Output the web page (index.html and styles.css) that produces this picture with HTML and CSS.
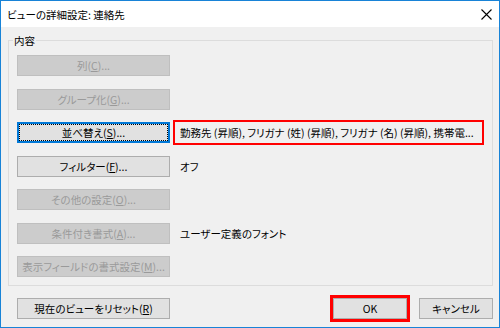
FILE: index.html
```html
<!DOCTYPE html>
<html lang="ja">
<head>
<meta charset="utf-8">
<link rel="stylesheet" href="styles.css">
</head>
<body>
<div class="window">
  <div class="titlebar">
    <span class="title">ビューの詳細設定: 連絡先</span>
    <svg class="close" width="11" height="11" viewBox="0 0 11 11"><path d="M0.5 0.5L10.5 10.5M10.5 0.5L0.5 10.5" stroke="#000" stroke-width="1.1" fill="none"/></svg>
  </div>
  <div class="content">
    <fieldset class="group">
      <legend class="legend">内容</legend>
      <div class="rows">
        <div class="row"><button class="btn wide" disabled>列(<u>C</u>)...</button></div>
        <div class="row"><button class="btn wide" disabled>グループ化(<u>G</u>)...</button></div>
        <div class="row"><button class="btn wide focus">並べ替え(<u>S</u>)...</button><div class="value highlight">勤務先 (昇順), フリガナ (姓) (昇順), フリガナ (名) (昇順), 携帯電...</div></div>
        <div class="row"><button class="btn wide">フィルター(<u>F</u>)...</button><div class="value">オフ</div></div>
        <div class="row"><button class="btn wide" disabled>その他の設定(<u>O</u>)...</button></div>
        <div class="row"><button class="btn wide" disabled>条件付き書式(<u>A</u>)...</button><div class="value">ユーザー定義のフォント</div></div>
        <div class="row"><button class="btn wide" disabled>表示フィールドの書式設定(<u>M</u>)...</button></div>
      </div>
    </fieldset>
    <div class="footer">
      <button class="btn wide">現在のビューをリセット(<u>R</u>)</button>
      <div class="spacer"></div>
      <div class="ok-mark"><button class="btn small">OK</button></div>
      <button class="btn small cancel">キャンセル</button>
    </div>
  </div>
</div>
</body>
</html>
```

FILE: styles.css
```css
* { box-sizing: border-box; }
html, body { margin: 0; padding: 0; }
body {
  font-family: "Noto Sans CJK JP", "Noto Sans", sans-serif;
  font-size: 10.5px;
  font-feature-settings: "palt" 1;
  color: #000;
  background: #fff;
}
.window {
  width: 500px;
  height: 328px;
  border: 1px solid #1883d7;
  display: flex;
  flex-direction: column;
  overflow: hidden;
}
.titlebar {
  height: 26px;
  flex: none;
  background: #fff;
  display: flex;
  align-items: center;
  padding-left: 6px;
}
.title { font-size: 10.5px; }
.close { margin-left: auto; margin-right: 7px; display: block; }
.content {
  flex: 1;
  background: #f0f0f0;
  padding: 6px 6px 0 7px;
  display: flex;
  flex-direction: column;
}
.group {
  margin: 0;
  border: 1px solid #dcdcdc;
  padding: 0 8px 8px 8px;
  min-width: 0;
}
.legend {
  padding: 0 1px;
  margin-left: -4px;
  line-height: 15px;
}
.rows {
  padding-top: 7px;
  display: flex;
  flex-direction: column;
  gap: 12.5px;
}
.row {
  display: flex;
  align-items: center;
  height: 21px;
}
.btn {
  font-family: inherit;
  font-size: 10.5px;
  font-feature-settings: "palt" 1;
  height: 21px;
  padding: 0;
  margin: 0;
  background: #e1e1e1;
  border: 1px solid #adadad;
  color: #000;
  border-radius: 0;
  white-space: nowrap;
  flex: none;
}
.btn u { text-decoration-thickness: 1px; text-underline-offset: 1px; }
.btn:disabled {
  background: #cccccc;
  border-color: #bfbfbf;
  color: #9a9a9a;
}
.wide { width: 153px; }
.small { width: 74px; }
.focus {
  border: 2px solid #0078d7;
  outline: 1px dotted #000;
  outline-offset: -3px;
}
.value {
  margin-left: 10px;
  white-space: nowrap;
}
.highlight {
  margin-left: 3px;
  width: 315px;
  height: 25px;
  margin-top: -2px;
  margin-bottom: -2px;
  border: 2px solid #f00;
  padding-left: 5px;
  display: flex;
  align-items: center;
}
.footer {
  margin-top: 12px;
  display: flex;
  align-items: center;
  padding-left: 9px;
}
.spacer { flex: 1; }
.ok-mark {
  border: 3px solid #f00;
  margin: -3px 0;
  display: flex;
}
.cancel { margin-left: 9px; }
```
